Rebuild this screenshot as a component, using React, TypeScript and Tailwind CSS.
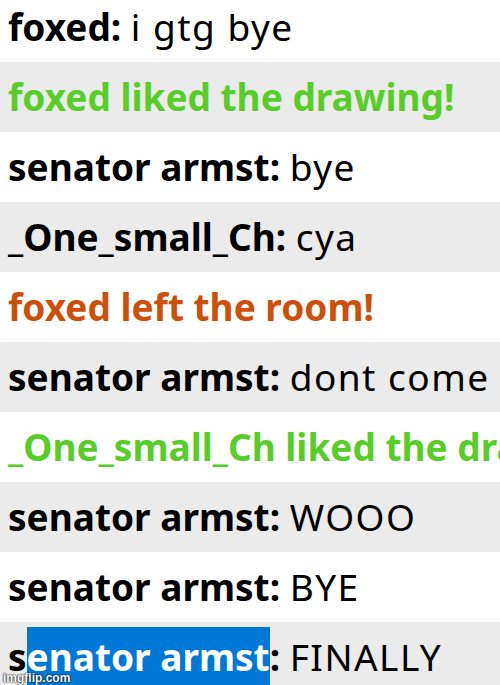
const messages = [
  { name: "foxed", text: "i gtg bye" },
  { event: "foxed liked the drawing!", tone: "green" },
  { name: "senator armst", text: "bye" },
  { name: "_One_small_Ch", text: "cya" },
  { event: "foxed left the room!", tone: "orange" },
  { name: "senator armst", text: "dont come back" },
  { event: "_One_small_Ch liked the drawing!", tone: "green" },
  { name: "senator armst", text: "WOOO" },
  { name: "senator armst", text: "BYE" },
];

export default function App() {
  return (
    <div className="relative h-[685px] w-[500px] overflow-hidden bg-white font-['Noto_Sans',sans-serif] text-[37px] text-black">
      <div className="-mt-2 flex flex-col">
        {messages.map((m, i) => (
          <div
            key={i}
            className={`flex h-[70px] items-center overflow-hidden whitespace-nowrap pl-2 ${
              i % 2 === 1 ? "bg-[#ebebeb]" : "bg-white"
            }`}
          >
            {m.event ? (
              <span
                className={`font-bold ${
                  m.tone === "green" ? "text-[#56ce27]" : "text-[#ce4f0a]"
                }`}
              >
                {m.event}
              </span>
            ) : (
              <span>
                <b>{m.name}:</b>{" "}
                <span className="tracking-[0.04em]">{m.text}</span>
              </span>
            )}
          </div>
        ))}
        <div className="flex h-[70px] items-center overflow-hidden whitespace-nowrap bg-[#ebebeb] pl-2">
          <span>
            <b>
              s<span className="bg-[#0078d7] py-1 text-white">enator armst</span>:
            </b>{" "}
            <span className="tracking-[0.04em]">FINALLY</span>
          </span>
        </div>
      </div>
      <span className="absolute bottom-[1px] left-[3px] font-['Liberation_Sans',sans-serif] text-[12px] font-bold leading-none text-white [text-shadow:0_0_2px_#000,0_0_1px_#000]">
        imgflip.com
      </span>
    </div>
  );
}
